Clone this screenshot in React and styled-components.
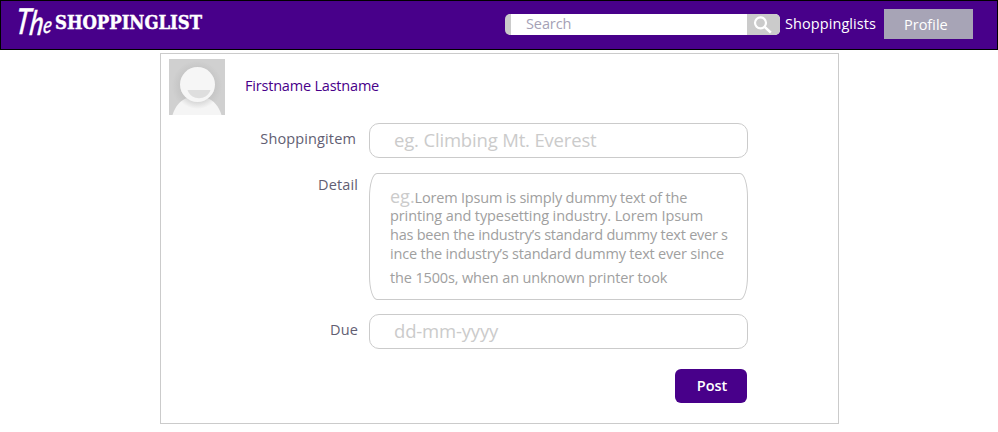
import React from "react";
import styled, { createGlobalStyle } from "styled-components";

const purple = "#48008a";
const line = "#cbcbcb";

const GlobalStyle = createGlobalStyle`
  * { box-sizing: border-box; }
  body {
    margin: 0;
    background: #fff;
    font: 14.5px/20px "Open Sans", "Noto Sans", sans-serif;
  }
`;

const Page = styled.div`
  height: 432px;
  overflow: hidden;
`;

const Header = styled.header`
  display: flex;
  align-items: flex-start;
  height: 50px;
  border: 1px solid #000;
  background: ${purple};
  color: #fff;
`;

const Logo = styled.svg`
  display: block;
  width: 204px;
  height: 48px;
  margin-right: 300px;
  flex: none;
  overflow: visible;
  fill: #fff;
`;

const SearchBox = styled.div`
  display: flex;
  width: 275px;
  height: 21px;
  margin-top: 13px;
  flex: none;
  overflow: hidden;
  border-left: 6px solid ${line};
  border-radius: 5px;
  background: #fff;
`;

const SearchText = styled.span`
  flex: 1;
  padding-left: 15px;
  line-height: 20px;
  letter-spacing: -0.1px;
  color: #a5a1b6;
`;

const SearchButton = styled.span`
  display: block;
  width: 33px;
  height: 21px;
  background: ${line};
  svg { display: block; }
`;

const NavLink = styled.a`
  width: 104px;
  margin-top: 13px;
  padding-left: 5px;
  flex: none;
  white-space: nowrap;
  letter-spacing: 0.08px;
`;

const ProfileLink = styled.a`
  width: 89px;
  height: 30px;
  margin: 8px 0 0 0;
  padding-left: 20px;
  flex: none;
  line-height: 31px;
  background: #a7a4b6;
`;

const Card = styled.main`
  width: 679px;
  height: 371px;
  margin: 3px 0 0 160px;
  padding: 5px 90px 0 8px;
  border: 1px solid ${line};
`;

const User = styled.div`
  display: flex;
  height: 56px;
  svg { display: block; flex: none; }
`;

const Name = styled.span`
  margin: 17px 0 0 20px;
  letter-spacing: -0.2px;
  color: ${purple};
`;

const Row = styled.div`
  display: flex;
  justify-content: flex-end;
  margin-top: ${(p) => p.$gap}px;
`;

const Label = styled.label`
  margin: ${(p) => p.$top}px ${(p) => p.$right}px 0 0;
  letter-spacing: 0.13px;
  color: #625e72;
`;

const Field = styled.div`
  width: 379px;
  height: 35px;
  padding-left: 24px;
  border: 1px solid ${line};
  border-radius: 10px;
  font-size: 18.5px;
  letter-spacing: -0.17px;
  line-height: 32px;
  color: #cbcbcb;
  white-space: nowrap;
`;

const TextArea = styled(Field)`
  height: 127px;
  padding: 13px 0 0 20px;
  border-radius: 8px / 24px;
  font-size: 14.5px;
  line-height: 19px;
  color: #a0a0a0;
`;

const TextLine = styled.div`
  height: 19px;
  margin-top: ${(p) => p.$gap || 0}px;
  letter-spacing: ${(p) => p.$track || 0}px;
`;

const LeadLine = styled(TextLine)`
  line-height: 17px;
`;

const Eg = styled.span`
  font-size: 18px;
  line-height: 1;
  letter-spacing: 0;
  color: #cbcbcb;
`;

const PostButton = styled.button`
  width: 72px;
  height: 34px;
  margin: 0 1px 0 0;
  padding: 0 0 0 2px;
  border: 0;
  border-radius: 6px;
  background: ${purple};
  color: #fff;
  font: inherit;
  font-weight: 600;
`;

function BrandLogo() {
  return (
    <Logo viewBox="1 1 204 48" role="img" aria-label="The Shoppinglist">
      <text
        transform="translate(18 34) skewX(-8) scale(0.76 1)"
        fontFamily="Lato, sans-serif"
        fontStyle="italic"
        fontWeight="500"
        stroke="#fff"
        strokeWidth="0.3"
      >
        <tspan x="-5" fontSize="36">T</tspan>
        <tspan x="14" y="1" fontSize="34">h</tspan>
        <tspan x="32" y="-1" fontSize="23">e</tspan>
      </text>
      <text
        x="55"
        y="29"
        fontFamily="'DejaVu Serif', serif"
        fontSize="19"
        fontWeight="700"
        stroke="#fff"
        strokeWidth="0.5"
        textLength="147"
        lengthAdjust="spacingAndGlyphs"
      >
        SHOPPINGLIST
      </text>
    </Logo>
  );
}

function SearchIcon() {
  return (
    <svg width="33" height="21" viewBox="0 0 33 21" fill="none" stroke="#fff">
      <circle cx="13.5" cy="8.8" r="5.5" strokeWidth="2.2" />
      <path d="M17.4 12.6 L23.8 18.6" strokeWidth="2.6" />
    </svg>
  );
}

function Avatar() {
  return (
    <svg width="56" height="56" viewBox="0 0 56 56">
      <defs>
        <radialGradient id="backdrop" cx="50%" cy="48%" r="60%">
          <stop offset="0.5" stopColor="#c5c5c5" />
          <stop offset="0.75" stopColor="#d0d0d0" />
        </radialGradient>
        <radialGradient id="shade" cx="28.5" cy="27" r="23" gradientUnits="userSpaceOnUse">
          <stop offset="0.7" stopColor="#d9d9d9" />
          <stop offset="1" stopColor="#f5f5f5" />
        </radialGradient>
      </defs>
      <rect width="56" height="56" fill="url(#backdrop)" />
      <path d="M3.5 56 C6 48 11 41 19 38.5 H37 C45 41 50 48 52.5 56 Z" fill="url(#shade)" />
      <circle cx="28.5" cy="25.5" r="17.5" fill="#f6f6f6" />
      <path d="M18.5 31 H41.5 C38 42 22 42 18.5 31 Z" fill="#dedede" />
    </svg>
  );
}

export default function App() {
  return (
    <>
      <GlobalStyle />
      <Page>
        <Header>
          <BrandLogo />
          <SearchBox>
            <SearchText>Search</SearchText>
            <SearchButton><SearchIcon /></SearchButton>
          </SearchBox>
          <NavLink>Shoppinglists</NavLink>
          <ProfileLink>Profile</ProfileLink>
        </Header>
        <Card>
          <User>
            <Avatar />
            <Name>Firstname Lastname</Name>
          </User>
          <Row $gap={8}>
            <Label $top={6} $right={13}>Shoppingitem</Label>
            <Field>eg. Climbing Mt. Everest</Field>
          </Row>
          <Row $gap={15}>
            <Label $top={2} $right={11}>Detail</Label>
            <TextArea>
              <LeadLine $track={-0.2}><Eg>eg.</Eg>Lorem Ipsum is simply dummy text of the</LeadLine>
              <TextLine $track={-0.11}>printing and typesetting industry. Lorem Ipsum</TextLine>
              <TextLine $track={-0.25}>has been the industry’s standard dummy text ever s</TextLine>
              <TextLine $track={-0.2}>ince the industry’s standard dummy text ever since</TextLine>
              <TextLine $gap={5} $track={-0.14}>the 1500s, when an unknown printer took</TextLine>
            </TextArea>
          </Row>
          <Row $gap={14}>
            <Label $top={6} $right={11}>Due</Label>
            <Field>dd-mm-yyyy</Field>
          </Row>
          <Row $gap={20}>
            <PostButton>Post</PostButton>
          </Row>
        </Card>
      </Page>
    </>
  );
}
